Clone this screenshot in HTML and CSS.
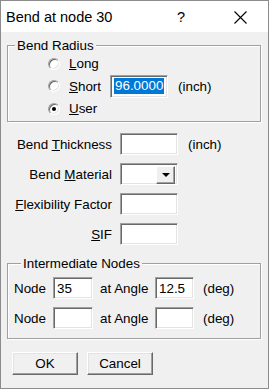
FILE: index.html
```html
<!DOCTYPE html>
<html lang="en">
<head>
  <meta charset="UTF-8">
  <title>Bend at node 30</title>
  <link rel="stylesheet" href="styles.css">
</head>
<body>
  <div class="dialog">
    <div class="titlebar">
      <span class="title">Bend at node 30</span>
      <span class="help">?</span>
      <span class="close">
        <svg width="13" height="13" viewBox="0 0 13 13"><path d="M0.5 0.5 L12.5 12.5 M12.5 0.5 L0.5 12.5" stroke="#000" stroke-width="1.1" fill="none"/></svg>
      </span>
    </div>

    <div class="client">
      <fieldset class="group radius">
        <legend>Bend Radius</legend>
        <div class="radio-row"><span class="radio"></span><span class="opt"><u>L</u>ong</span></div>
        <div class="radio-row tall">
          <span class="radio"></span><span class="opt short-label"><u>S</u>hort</span>
          <span class="edit short"><span class="sel">96.0000</span></span>
          <span class="unit">(inch)</span>
        </div>
        <div class="radio-row"><span class="radio checked"></span><span class="opt"><u>U</u>ser</span></div>
      </fieldset>

      <div class="props">
        <label>Bend <u>T</u>hickness</label>
        <span class="edit"></span>
        <span class="unit">(inch)</span>

        <label>Bend <u>M</u>aterial</label>
        <span class="edit combo"><span class="drop"><span class="arrow"></span></span></span>
        <span></span>

        <label><u>F</u>lexibility Factor</label>
        <span class="edit"></span>
        <span></span>

        <label><u>S</u>IF</label>
        <span class="edit"></span>
        <span></span>
      </div>

      <fieldset class="group nodes">
        <legend>Intermediate Nodes</legend>
        <div class="node-grid">
          <span>Node</span>
          <span class="edit">35</span>
          <span class="pad">at Angle</span>
          <span class="edit">12.5</span>
          <span class="pad2">(deg)</span>

          <span>Node</span>
          <span class="edit"></span>
          <span class="pad">at Angle</span>
          <span class="edit"></span>
          <span class="pad2">(deg)</span>
        </div>
      </fieldset>

      <div class="buttons">
        <button class="btn">OK</button>
        <button class="btn">Cancel</button>
      </div>
    </div>
  </div>
</body>
</html>
```

FILE: styles.css
```css
body {
  margin: 0;
  font-family: "Liberation Sans", Arial, sans-serif;
  font-size: 13.4px;
  color: #000;
  background: #fff;
}
.dialog {
  width: 269px;
  height: 389px;
  box-sizing: border-box;
  border: 1px solid #8c8c8c;
  background: #f0f0f0;
}
.titlebar {
  height: 31px;
  background: #fff;
  display: flex;
  align-items: center;
  padding: 1px 0 0 5px;
  box-sizing: border-box;
  font-size: 14.5px;
}
.title {
  flex: 1;
}
.help {
  width: 12px;
  margin-right: 45px;
}
.close {
  display: flex;
  margin-right: 21px;
}
.client {
  padding-top: 6px;
}
.group {
  margin: 0 7px 0 6px;
  padding: 0;
  border: 1px solid #a0a0a0;
  box-shadow: 1px 1px 0 #fff, inset 1px 1px 0 #fff;
  min-width: 0;
}
.group legend {
  margin-left: 7px;
  padding: 0 2px;
  line-height: 15px;
  background: #f0f0f0;
}
.radius {
  padding: 0 0 2px 0;
}
.radio-row {
  height: 21px;
  display: flex;
  align-items: center;
  padding-left: 40px;
}
.radio-row.tall {
  height: 24px;
}
.radio {
  width: 12px;
  height: 12px;
  box-sizing: border-box;
  border-radius: 50%;
  border: 1px solid;
  border-color: #a0a0a0 #fff #fff #a0a0a0;
  box-shadow: inset 1px 1px 0 #696969, inset -1px -1px 0 #e3e3e3;
  background: #fff;
  position: relative;
}
.radio.checked::after {
  content: "";
  position: absolute;
  left: 3px;
  top: 3px;
  width: 4px;
  height: 4px;
  border-radius: 50%;
  background: #000;
}
.opt {
  margin-left: 9px;
}
.short-label {
  width: 41px;
}
.edit {
  display: block;
  height: 22px;
  box-sizing: border-box;
  background: #fff;
  border: 1px solid;
  border-color: #a0a0a0 #fff #fff #a0a0a0;
  box-shadow: inset 1px 1px 0 #696969, inset -1px -1px 0 #e3e3e3;
  padding: 3px 2px 0 3px;
  line-height: 15px;
}
.edit.short {
  width: 58px;
  height: 23px;
  padding-top: 2px;
}
.sel {
  display: inline-block;
  background: #0078d7;
  color: #fff;
  padding: 0 1px;
  line-height: 16px;
}
.unit {
  margin-left: 10px;
}
.props {
  margin-top: 11px;
  display: grid;
  grid-template-columns: 111px 58px auto;
  grid-auto-rows: 22px;
  column-gap: 8px;
  row-gap: 8px;
  align-items: center;
}
.props label {
  text-align: right;
}
.props .unit {
  margin-left: 2px;
}
.combo {
  display: flex;
  justify-content: flex-end;
  padding: 2px;
}
.drop {
  width: 19px;
  height: 18px;
  box-sizing: border-box;
  border: 1px solid;
  border-color: #fff #696969 #696969 #fff;
  box-shadow: inset -1px -1px 0 #a0a0a0;
  background: #f0f0f0;
  display: flex;
  align-items: center;
  justify-content: center;
}
.arrow {
  width: 0;
  height: 0;
  border-left: 4px solid transparent;
  border-right: 4px solid transparent;
  border-top: 4px solid #000;
}
.nodes {
  margin-top: 11px;
  padding: 6px 0 9px 6px;
}
.node-grid {
  display: grid;
  grid-template-columns: 39px 40px 62px 39px auto;
  grid-auto-rows: 22px;
  row-gap: 8px;
  align-items: center;
}
.pad {
  padding-left: 7px;
}
.pad2 {
  padding-left: 9px;
}
.buttons {
  display: flex;
  gap: 9px;
  padding: 13px 0 0 11px;
}
.btn {
  width: 66px;
  height: 23px;
  font-family: inherit;
  font-size: 13.4px;
  padding: 0;
  border: 1px solid;
  border-color: #fff #696969 #696969 #fff;
  box-shadow: inset -1px -1px 0 #a0a0a0, inset 1px 1px 0 #e3e3e3;
  background: #f0f0f0;
  color: #000;
}
```
